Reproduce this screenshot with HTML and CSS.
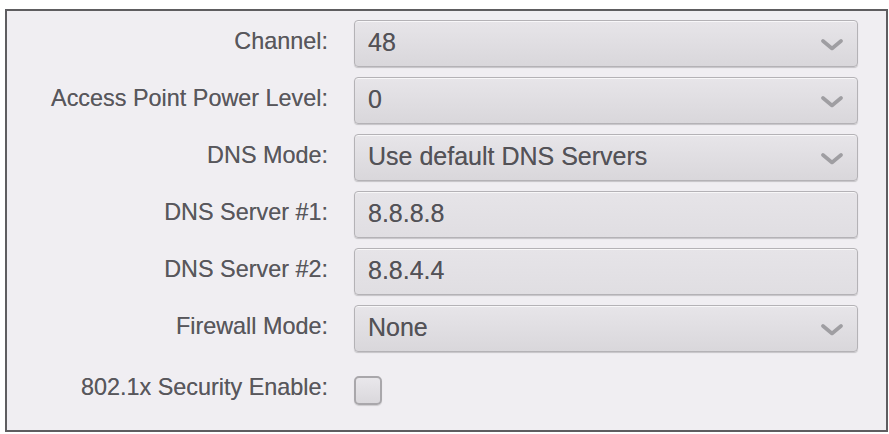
FILE: index.html
```html
<!DOCTYPE html>
<html lang="en">
<head>
<meta charset="utf-8">
<title>Wireless Settings</title>
<link rel="stylesheet" href="styles.css">
</head>
<body>
<div class="panel">
  <div class="form">
    <label class="lbl">Channel:</label>
    <div class="field select"><span class="val">48</span><svg class="chev" width="22" height="12" viewBox="0 0 22 12"><polyline points="2,2 11,9.5 20,2" fill="none" stroke="#9f9ea2" stroke-width="3.6" stroke-linejoin="round" stroke-linecap="round"/></svg></div>

    <label class="lbl">Access Point Power Level:</label>
    <div class="field select"><span class="val">0</span><svg class="chev" width="22" height="12" viewBox="0 0 22 12"><polyline points="2,2 11,9.5 20,2" fill="none" stroke="#9f9ea2" stroke-width="3.6" stroke-linejoin="round" stroke-linecap="round"/></svg></div>

    <label class="lbl">DNS Mode:</label>
    <div class="field select"><span class="val">Use default DNS Servers</span><svg class="chev" width="22" height="12" viewBox="0 0 22 12"><polyline points="2,2 11,9.5 20,2" fill="none" stroke="#9f9ea2" stroke-width="3.6" stroke-linejoin="round" stroke-linecap="round"/></svg></div>

    <label class="lbl">DNS Server #1:</label>
    <div class="field input"><span class="val">8.8.8.8</span></div>

    <label class="lbl">DNS Server #2:</label>
    <div class="field input"><span class="val">8.8.4.4</span></div>

    <label class="lbl">Firewall Mode:</label>
    <div class="field select"><span class="val">None</span><svg class="chev" width="22" height="12" viewBox="0 0 22 12"><polyline points="2,2 11,9.5 20,2" fill="none" stroke="#9f9ea2" stroke-width="3.6" stroke-linejoin="round" stroke-linecap="round"/></svg></div>

    <label class="lbl lbl-check">802.1x Security Enable:</label>
    <div class="check-cell"><span class="checkbox"></span></div>
  </div>
</div>
</body>
</html>
```

FILE: styles.css
```css
html, body {
  margin: 0;
  padding: 0;
  background: #ffffff;
}

body {
  font-family: "Liberation Sans", Arial, sans-serif;
  color: #555458;
}

.panel {
  margin: 9px 1px 2px 5px;
  width: 879px;
  height: 419px;
  border: 2px solid #5e5d60;
  background: #f0eef2;
  box-sizing: content-box;
}

.form {
  display: grid;
  grid-template-columns: 321px 504px;
  grid-auto-rows: 47px;
  column-gap: 26px;
  row-gap: 10px;
  padding: 9px 0 0 0;
}

.lbl {
  display: flex;
  align-items: center;
  justify-content: flex-end;
  font-size: 23.4px;
  color: #58575c;
  padding-bottom: 4px;
  white-space: nowrap;
  text-shadow: 0 0 0.6px rgba(80, 80, 85, 0.6);
}

.lbl-check {
  padding-bottom: 0;
  padding-top: 4px;
}

.field {
  box-sizing: border-box;
  display: flex;
  align-items: center;
  justify-content: space-between;
  border: 1px solid #b4b2b6;
  border-radius: 4px;
  padding: 0 14px 0 13px;
  box-shadow: 0 1px 1px rgba(0, 0, 0, 0.18), inset 0 1px 0 rgba(255, 255, 255, 0.7);
}

.select {
  background: linear-gradient(#e7e5e9, #d9d7db);
}

.input {
  background: linear-gradient(#e6e4e8, #e0dee2);
}

.val {
  font-size: 25px;
  color: #535257;
  padding-bottom: 2px;
  text-shadow: 0 0 0.6px rgba(80, 80, 85, 0.6);
}

.chev {
  display: block;
  margin-top: 2px;
}

.check-cell {
  display: flex;
  align-items: center;
  padding-top: 10px;
}

.checkbox {
  display: block;
  width: 28px;
  height: 29px;
  box-sizing: border-box;
  border: 2px solid #a9a7ab;
  border-radius: 5px;
  background: linear-gradient(#e9e7eb, #dad8dc);
  box-shadow: 0 1px 1px rgba(0, 0, 0, 0.15);
}
```
